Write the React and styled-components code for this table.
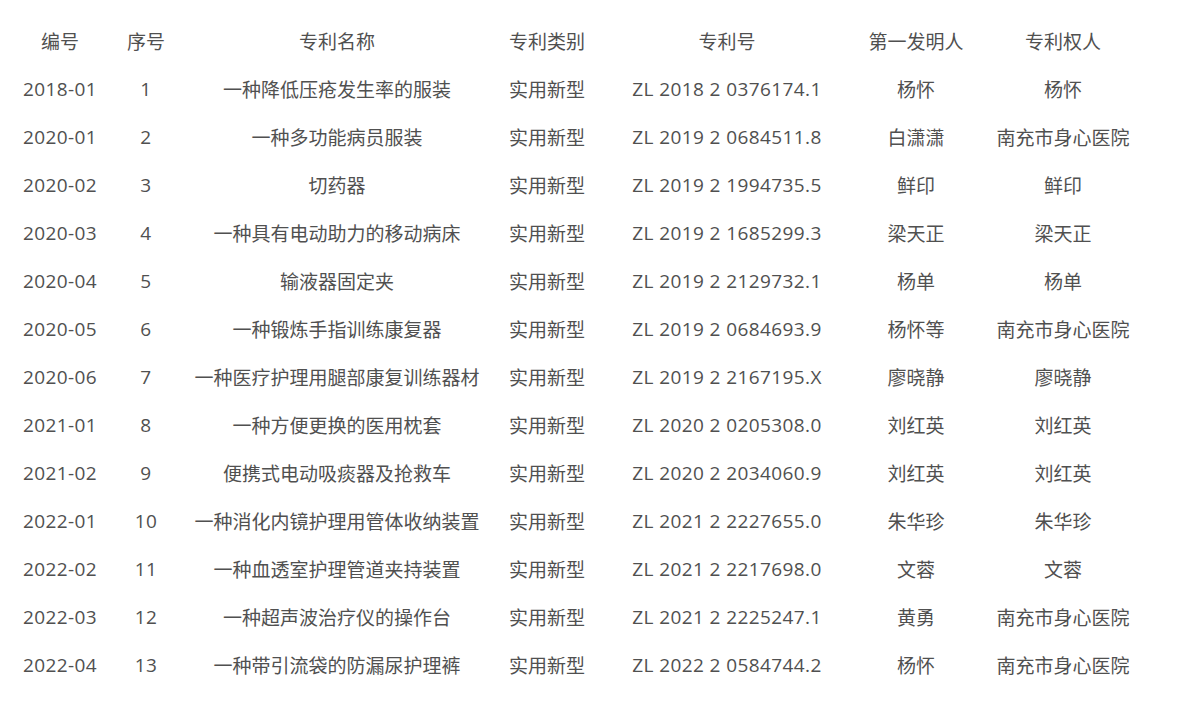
import React from "react";
import styled, { createGlobalStyle } from "styled-components";

const GlobalStyle = createGlobalStyle`
  html, body {
    margin: 0;
    padding: 0;
    background: #fff;
  }
  body {
    font-family: "Open Sans", "Noto Sans CJK SC", sans-serif;
    color: #505050;
  }
`;

const columns = [
  { key: "code", title: "编号", width: 120, latin: true },
  { key: "index", title: "序号", width: 52, latin: true },
  { key: "name", title: "专利名称", width: 330 },
  { key: "type", title: "专利类别", width: 90 },
  { key: "number", title: "专利号", width: 270, latin: true },
  { key: "inventor", title: "第一发明人", width: 108 },
  { key: "owner", title: "专利权人", width: 186 },
];

const HOSPITAL = "南充市身心医院";

const patents = [
  ["2018-01", "1", "一种降低压疮发生率的服装", "ZL 2018 2 0376174.1", "杨怀", "杨怀"],
  ["2020-01", "2", "一种多功能病员服装", "ZL 2019 2 0684511.8", "白潇潇", HOSPITAL],
  ["2020-02", "3", "切药器", "ZL 2019 2 1994735.5", "鲜印", "鲜印"],
  ["2020-03", "4", "一种具有电动助力的移动病床", "ZL 2019 2 1685299.3", "梁天正", "梁天正"],
  ["2020-04", "5", "输液器固定夹", "ZL 2019 2 2129732.1", "杨单", "杨单"],
  ["2020-05", "6", "一种锻炼手指训练康复器", "ZL 2019 2 0684693.9", "杨怀等", HOSPITAL],
  ["2020-06", "7", "一种医疗护理用腿部康复训练器材", "ZL 2019 2 2167195.X", "廖晓静", "廖晓静"],
  ["2021-01", "8", "一种方便更换的医用枕套", "ZL 2020 2 0205308.0", "刘红英", "刘红英"],
  ["2021-02", "9", "便携式电动吸痰器及抢救车", "ZL 2020 2 2034060.9", "刘红英", "刘红英"],
  ["2022-01", "10", "一种消化内镜护理用管体收纳装置", "ZL 2021 2 2227655.0", "朱华珍", "朱华珍"],
  ["2022-02", "11", "一种血透室护理管道夹持装置", "ZL 2021 2 2217698.0", "文蓉", "文蓉"],
  ["2022-03", "12", "一种超声波治疗仪的操作台", "ZL 2021 2 2225247.1", "黄勇", HOSPITAL],
  ["2022-04", "13", "一种带引流袋的防漏尿护理裤", "ZL 2022 2 0584744.2", "杨怀", HOSPITAL],
].map(([code, index, name, number, inventor, owner]) => ({
  code,
  index,
  name,
  type: "实用新型",
  number,
  inventor,
  owner,
}));

const Page = styled.div`
  padding-top: 17px;
`;

const Table = styled.table`
  border-collapse: collapse;
  table-layout: fixed;
  width: 1156px;
  font-size: 19px;
`;

const HeadCell = styled.th`
  height: 48px;
  padding: 0;
  font-weight: normal;
  text-align: center;
  white-space: nowrap;
  color: #505050;
`;

const Cell = styled.td`
  height: 48px;
  padding: 0;
  text-align: center;
  white-space: nowrap;
  color: #505050;
  letter-spacing: ${(p) => (p.$latin ? "0.4px" : "0")};
`;

export default function App() {
  return (
    <>
      <GlobalStyle />
      <Page>
        <Table>
          <colgroup>
            {columns.map((c) => (
              <col key={c.key} style={{ width: c.width }} />
            ))}
          </colgroup>
          <thead>
            <tr>
              {columns.map((c) => (
                <HeadCell key={c.key}>{c.title}</HeadCell>
              ))}
            </tr>
          </thead>
          <tbody>
            {patents.map((p) => (
              <tr key={p.code}>
                {columns.map((c) => (
                  <Cell key={c.key} $latin={c.latin}>
                    {p[c.key]}
                  </Cell>
                ))}
              </tr>
            ))}
          </tbody>
        </Table>
      </Page>
    </>
  );
}
